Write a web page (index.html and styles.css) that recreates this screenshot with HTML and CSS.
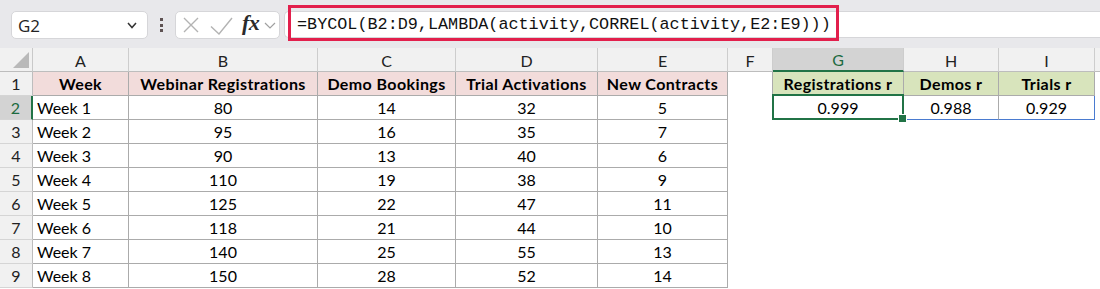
FILE: index.html
```html
<!DOCTYPE html>
<html>
<head>
<meta charset="utf-8">
<link rel="stylesheet" href="styles.css">
</head>
<body>
<div class="app">
  <div class="toolbar">
    <div class="namebox">
      <span class="nb-text">G2</span>
      <svg class="nb-chev" width="10" height="7" viewBox="0 0 10 7"><polyline points="1,1 5,5.5 9,1" fill="none" stroke="#333" stroke-width="1.5"/></svg>
    </div>
    <div class="vdots"><i></i><i></i><i></i></div>
    <div class="fxbox">
      <svg class="ic-x" width="16" height="16" viewBox="0 0 16 16"><path d="M1 1 L15 15 M15 1 L1 15" stroke="#b3b3b3" stroke-width="1.4" fill="none"/></svg>
      <svg class="ic-check" width="23" height="18" viewBox="0 0 23 18"><polyline points="1,9.5 9,17 22,1" fill="none" stroke="#b3b3b3" stroke-width="1.4"/></svg>
      <span class="fx">fx</span>
      <svg class="ic-chev" width="12" height="7" viewBox="0 0 12 7"><polyline points="1,1 6,6 11,1" fill="none" stroke="#a0a0a0" stroke-width="1.2"/></svg>
    </div>
    <div class="formula">
      <span class="ftext">=BYCOL(B2:D9,LAMBDA(activity,CORREL(activity,E2:E9)))</span>
      <div class="hl"></div>
    </div>
  </div>

  <div class="sheet">
    <div class="corner"><span class="tri"></span></div>
    <div class="ch">A</div><div class="ch">B</div><div class="ch">C</div><div class="ch">D</div><div class="ch">E</div><div class="ch">F</div><div class="ch ch-sel">G</div><div class="ch">H</div><div class="ch">I</div><div class="ch ch-end"></div>

    <div class="rh">1</div>
    <div class="t hp b">Week</div><div class="t hp b">Webinar Registrations</div><div class="t hp b">Demo Bookings</div><div class="t hp b">Trial Activations</div><div class="t hp b">New Contracts</div>
    <div class="c fr"></div>
    <div class="t hg b">Registrations r</div><div class="t hg b">Demos r</div><div class="t hg b">Trials r</div><div class="c"></div>

    <div class="rh rh-sel">2</div>
    <div class="t l">Week 1</div><div class="t">80</div><div class="t">14</div><div class="t">32</div><div class="t">5</div>
    <div class="c fr"></div>
    <div class="t sp sel">0.999</div><div class="t sp">0.988</div><div class="t sp spr">0.929</div><div class="c"></div>

    <div class="rh">3</div>
    <div class="t l">Week 2</div><div class="t">95</div><div class="t">16</div><div class="t">35</div><div class="t">7</div>
    <div class="c"></div><div class="c"></div><div class="c"></div><div class="c"></div><div class="c"></div>

    <div class="rh">4</div>
    <div class="t l">Week 3</div><div class="t">90</div><div class="t">13</div><div class="t">40</div><div class="t">6</div>
    <div class="c"></div><div class="c"></div><div class="c"></div><div class="c"></div><div class="c"></div>

    <div class="rh">5</div>
    <div class="t l">Week 4</div><div class="t">110</div><div class="t">19</div><div class="t">38</div><div class="t">9</div>
    <div class="c"></div><div class="c"></div><div class="c"></div><div class="c"></div><div class="c"></div>

    <div class="rh">6</div>
    <div class="t l">Week 5</div><div class="t">125</div><div class="t">22</div><div class="t">47</div><div class="t">11</div>
    <div class="c"></div><div class="c"></div><div class="c"></div><div class="c"></div><div class="c"></div>

    <div class="rh">7</div>
    <div class="t l">Week 6</div><div class="t">118</div><div class="t">21</div><div class="t">44</div><div class="t">10</div>
    <div class="c"></div><div class="c"></div><div class="c"></div><div class="c"></div><div class="c"></div>

    <div class="rh">8</div>
    <div class="t l">Week 7</div><div class="t">140</div><div class="t">25</div><div class="t">55</div><div class="t">13</div>
    <div class="c"></div><div class="c"></div><div class="c"></div><div class="c"></div><div class="c"></div>

    <div class="rh">9</div>
    <div class="t l">Week 8</div><div class="t">150</div><div class="t">28</div><div class="t">52</div><div class="t">14</div>
    <div class="c"></div><div class="c"></div><div class="c"></div><div class="c"></div><div class="c"></div>
  </div>
</div>
</body>
</html>
```

FILE: styles.css
```css
* { box-sizing: border-box; }
html, body { margin: 0; padding: 0; background: #ffffff; }
body { width: 1100px; height: 289px; overflow: hidden; font-family: Lato, "Liberation Sans", sans-serif; color: #000; }

.app { width: 1100px; }

/* ---------- toolbar ---------- */
.toolbar {
  height: 48px;
  background: #e8e8eb;
  display: flex;
  align-items: flex-start;
  padding: 11px 0 0 11px;
}
.namebox {
  width: 137px;
  height: 28px;
  background: #fff;
  border: 1px solid #d6d6d9;
  border-radius: 5px;
  display: flex;
  align-items: center;
  justify-content: space-between;
  padding: 0 10px 0 6px;
}
.nb-text { font-family: "Open Sans", "Liberation Sans", sans-serif; font-size: 17px; color: #222; }
.vdots {
  width: 27px;
  height: 28px;
  display: flex;
  flex-direction: column;
  align-items: center;
  justify-content: center;
  gap: 2.5px;
}
.vdots i { display: block; width: 3px; height: 3px; background: #5e5252; }
.fxbox {
  width: 105px;
  height: 28px;
  background: #fff;
  border: 1px solid #d6d6d9;
  border-radius: 5px;
  display: flex;
  align-items: center;
  padding-left: 7px;
}
.ic-x { margin-right: 11px; }
.ic-check { margin-top: 1px; margin-right: 9px; }
.fx { font-family: "Liberation Serif", serif; font-style: italic; font-weight: 700; font-size: 22px; color: #2a2a2a; letter-spacing: -0.5px; margin-top: -4px; }
.ic-chev { margin-left: 5px; margin-top: 1px; }

.formula {
  position: relative;
  flex: 1;
  height: 27px;
  margin-left: 4px;
  background: #fff;
  border-top: 1px solid #d6d6d9;
  border-bottom: 1px solid #d6d6d9;
  border-left: 1px solid #d6d6d9;
  border-radius: 5px 0 0 5px;
  display: flex;
  align-items: center;
  padding-left: 12px;
}
.ftext {
  font-family: "Liberation Mono", "DejaVu Sans Mono", monospace;
  font-size: 16.8px;
  color: #111;
  white-space: nowrap;
}
.hl {
  position: absolute;
  left: 3px;
  top: -7px;
  width: 551px;
  height: 36px;
  border: 3px solid #e21f4c;
  pointer-events: none;
}

/* ---------- sheet ---------- */
.sheet {
  display: grid;
  grid-template-columns: 33px 96px 189px 138px 142px 130px 45px 131px 95px 96px 5px;
  grid-auto-rows: 24px;
  font-size: 16px;
}
.sheet > div {
  display: flex;
  align-items: center;
  justify-content: center;
  white-space: nowrap;
  overflow: visible;
}
.corner {
  position: relative;
  background: #f1f1f1;
  border-right: 1px solid #c9c9c9;
  border-bottom: 1px solid #bdbdbd;
}
.tri {
  position: absolute;
  right: 3px;
  bottom: 3px;
  width: 0;
  height: 0;
  border-left: 16px solid transparent;
  border-bottom: 16px solid #b9b9b9;
}
.ch {
  background: #f1f1f1;
  border-right: 1px solid #cdcdcd;
  border-bottom: 1px solid #bdbdbd;
  color: #222;
  font-size: 16px;
  padding-top: 1px;
}
.ch-end { border-right: none; }
.ch-sel {
  background: #d3d3d3;
  color: #1d6a3f;
  border-bottom: 2px solid #217346;
}
.rh {
  background: #f1f1f1;
  border-right: 1px solid #bdbdbd;
  border-bottom: 1px solid #d5d5d5;
  color: #222;
}
.rh-sel {
  background: #d3d3d3;
  color: #1d6a3f;
  border-right: 2px solid #217346;
}
.c { background: #fff; }
.fr { border-right: 1px solid #ababab; }
.t {
  background: #fff;
  border-right: 1px solid #ababab;
  border-bottom: 1px solid #ababab;
}
.l { justify-content: flex-start !important; padding-left: 4px; }
.b { font-weight: 700; letter-spacing: 0.4px; }
.hp { background: #f2dcdb; }
.hg { background: #d8e4bc; }
.sp { border-bottom-color: #4a7bd0; }
.spr { border-right-color: #4a7bd0; }
.sel { position: relative; }
.sel::before {
  content: "";
  position: absolute;
  left: -1px;
  top: -2px;
  right: -1px;
  bottom: -1px;
  border: 2px solid #217346;
}
.sel::after {
  content: "";
  position: absolute;
  right: -4px;
  bottom: -4px;
  width: 7px;
  height: 7px;
  background: #217346;
  border: 1px solid #fff;
}
```
